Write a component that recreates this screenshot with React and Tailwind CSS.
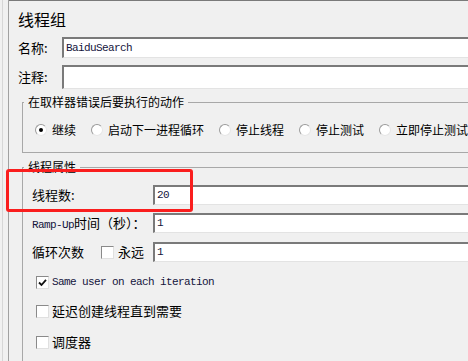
const cjk = { fontFamily: '"Noto Sans CJK SC", "Noto Sans", sans-serif' }
const mono = { fontFamily: '"Liberation Mono", "DejaVu Sans Mono", monospace' }

function Field({ value, className = '' }) {
  return (
    <div
      className={`flex flex-1 items-center bg-white border-t-2 border-l-2 border-b border-t-[#7a7a7a] border-l-[#7a7a7a] border-b-[#e3e3e3] pl-[2px] text-[11px] tracking-[-0.6px] text-[#14143c] ${className}`}
      style={mono}
    >
      {value}
    </div>
  )
}

function Radio({ label, checked }) {
  return (
    <div className="flex items-center gap-[5px]">
      <span className="flex h-[12px] w-[12px] items-center justify-center rounded-full border border-[#9a9a9a] border-b-[#e6e6e6] border-r-[#e6e6e6] bg-white">
        {checked && <span className="h-[4px] w-[4px] rounded-full bg-black" />}
      </span>
      <span>{label}</span>
    </div>
  )
}

function Check({ checked }) {
  return (
    <span className="flex h-[13px] w-[13px] items-center justify-center border border-[#8a8a8a] border-b-[#e0e0e0] border-r-[#e0e0e0] bg-white">
      {checked && (
        <svg width="9" height="9" viewBox="0 0 9 9">
          <path d="M1 4.5 L3.5 7 L8 1.8" fill="none" stroke="#111" strokeWidth="1.8" />
        </svg>
      )}
    </span>
  )
}

export default function App() {
  return (
    <div className="relative flex h-[361px] w-[468px] overflow-hidden bg-[#f0f0f0] text-[12px] text-black" style={cjk}>
      <div className="ml-[2px] w-px bg-[#d6d6d6]" />
      <div className="ml-[5px] w-px bg-[#a0a0a0]" />

      <div className="flex-1 overflow-hidden border-t border-[#7a7a7a]">
        <div className="flex h-[36px] items-center pl-[9px] text-[16px]">线程组</div>

        <div className="flex h-[21px] items-center pl-[9px]">
          <span className="w-[44px] text-[13px]">名称:</span>
          <Field value="BaiduSearch" className="h-[21px]" />
        </div>

        <div className="mt-[7px] flex h-[24px] items-center pl-[9px]">
          <span className="w-[44px] text-[13px]">注释:</span>
          <Field value="" className="h-[24px]" />
        </div>

        <fieldset className="ml-[13px] mt-[5px] h-[59px] w-[460px] border border-[#a8a8a8]">
          <legend className="ml-px px-[4px] leading-[16px]">在取样器错误后要执行的动作</legend>
          <div className="mt-[11px] flex items-center gap-[15px] whitespace-nowrap pl-[12px]">
            <Radio label="继续" checked />
            <Radio label="启动下一进程循环" />
            <Radio label="停止线程" />
            <Radio label="停止测试" />
            <Radio label="立即停止测试" />
          </div>
        </fieldset>

        <fieldset className="ml-[13px] mt-[6px] h-[220px] w-[460px] border-l border-t border-[#a8a8a8]">
          <legend className="ml-px px-[4px] leading-[16px]">线程属性</legend>

          <div className="mt-[10px] flex h-[20px] items-center pl-[9px]">
            <span className="w-[121px] text-[13px]">线程数:</span>
            <Field value="20" className="h-[20px]" />
          </div>

          <div className="mt-[8px] flex h-[20px] items-center pl-[9px]">
            <span className="w-[121px] whitespace-nowrap text-[13px]">
              <span className="text-[11px] tracking-[-0.6px] text-[#14143c]" style={mono}>Ramp-Up</span>时间（秒）：
            </span>
            <Field value="1" className="h-[20px]" />
          </div>

          <div className="mt-[9px] flex h-[20px] items-center pl-[9px]">
            <span className="w-[69px] text-[13px]">循环次数</span>
            <Check />
            <span className="ml-[4px] w-[35px] text-[13px]">永远</span>
            <Field value="1" className="h-[20px]" />
          </div>

          <div className="mt-[13px] flex h-[14px] items-center gap-[3px] pl-[13px]">
            <Check checked />
            <span className="text-[11px] tracking-[-0.6px] text-[#14143c]" style={mono}>Same user on each iteration</span>
          </div>

          <div className="mt-[15px] flex h-[14px] items-center gap-[3px] pl-[13px]">
            <Check />
            <span className="text-[13px]">延迟创建线程直到需要</span>
          </div>

          <div className="mt-[17px] flex h-[14px] items-center gap-[3px] pl-[13px]">
            <Check />
            <span className="text-[13px]">调度器</span>
          </div>
        </fieldset>
      </div>

      <div className="pointer-events-none absolute left-[6px] top-[169px] h-[43px] w-[187px] rounded-[3px] border-[3px] border-[#fa1e1e]" />
    </div>
  )
}
